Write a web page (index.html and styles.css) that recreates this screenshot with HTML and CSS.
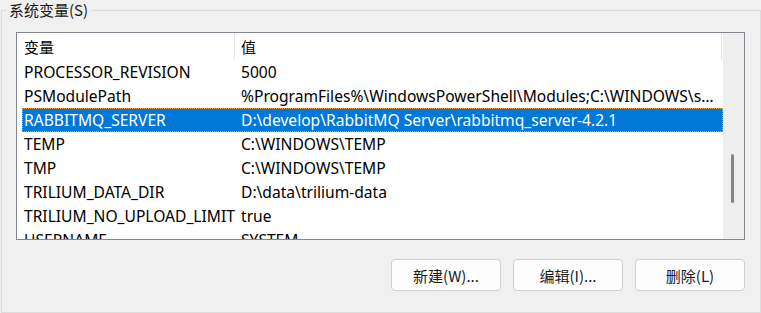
FILE: index.html
```html
<!DOCTYPE html>
<html>
<head>
    <meta charset="UTF-8">
    <title>系统变量</title>
    <link rel="stylesheet" href="styles.css">
</head>
<body>
<fieldset class="group">
    <legend>系统变量(S)</legend>
    <div class="list">
        <div class="table">
            <div class="head">
                <span class="col name">变量</span>
                <span class="col value">值</span>
            </div>
            <ul class="rows">
                <li><span class="name">PROCESSOR_REVISION</span><span class="value">5000</span></li>
                <li><span class="name">PSModulePath</span><span class="value">%ProgramFiles%\WindowsPowerShell\Modules;C:\WINDOWS\system32\WindowsPowerShell\v1.0\Modules</span></li>
                <li class="sel"><span class="name">RABBITMQ_SERVER</span><span class="value">D:\develop\RabbitMQ Server\rabbitmq_server-4.2.1</span></li>
                <li><span class="name">TEMP</span><span class="value">C:\WINDOWS\TEMP</span></li>
                <li><span class="name">TMP</span><span class="value">C:\WINDOWS\TEMP</span></li>
                <li><span class="name">TRILIUM_DATA_DIR</span><span class="value">D:\data\trilium-data</span></li>
                <li><span class="name">TRILIUM_NO_UPLOAD_LIMIT</span><span class="value">true</span></li>
                <li><span class="name">USERNAME</span><span class="value">SYSTEM</span></li>
            </ul>
        </div>
        <div class="scroll"><div class="thumb"></div></div>
    </div>
    <div class="buttons">
        <button>新建(W)...</button>
        <button>编辑(I)...</button>
        <button>删除(L)</button>
    </div>
</fieldset>
</body>
</html>
```

FILE: styles.css
```css
* {
    margin: 0;
    padding: 0;
    box-sizing: border-box;
    list-style: none;
}

body {
    background: #f0f0f0;
    font-family: "Noto Sans", "Noto Sans CJK SC", sans-serif;
    font-size: 15px;
    color: #000;
    width: 761px;
    height: 313px;
    overflow: hidden;
}

.group {
    margin-left: 1px;
    width: 760px;
    height: 313px;
    border: 1px solid #dcdcdc;
    padding: 0;
}

.group > legend {
    margin-left: 4px;
    padding: 0 3px;
    line-height: 20px;
    font-family: "Noto Sans CJK SC", sans-serif;
    color: #1a1a1a;
}

.list {
    margin: 12px 0 0 14px;
    width: 729px;
    height: 208px;
    border: 1px solid #828790;
    background: #fff;
    display: flex;
    overflow: hidden;
}

.table {
    width: 706px;
    overflow: hidden;
}

.head {
    height: 27px;
    display: flex;
    align-items: center;
    font-family: "Noto Sans CJK SC", sans-serif;
}

.head > .col {
    height: 26px;
    line-height: 26px;
    margin-top: 1px;
}

.head > .name {
    width: 218px;
    padding-left: 7px;
    border-right: 1px solid #e5e5e5;
}

.head > .value {
    width: 487px;
    padding-left: 6px;
    border-right: 1px solid #e5e5e5;
}

.rows > li {
    margin-left: 5px;
    height: 24px;
    line-height: 24px;
    display: flex;
    white-space: nowrap;
    font-size: 15.6px;
}

.rows > li > .name {
    width: 219px;
    flex-shrink: 0;
    padding-left: 2px;
    overflow: hidden;
}

.rows > li > .value {
    flex: 1;
    overflow: hidden;
    text-overflow: ellipsis;
    padding-right: 6px;
}

.rows > li.sel {
    background: #0078d7;
    color: #fff;
    outline: 1px dotted #e8a35c;
    outline-offset: -1px;
}

.scroll {
    width: 21px;
    height: 206px;
    background: #eeeeee;
    padding-top: 121px;
    padding-left: 8px;
}

.thumb {
    width: 3px;
    height: 49px;
    background: #858585;
    border-radius: 2px;
}

.buttons {
    margin: 19px 0 0 389px;
    display: flex;
    gap: 12px;
}

.buttons > button {
    width: 110px;
    height: 32px;
    background: #fdfdfd;
    border: 1px solid #d0d0d0;
    border-radius: 4px;
    font-family: "Noto Sans CJK SC", sans-serif;
    font-size: 15px;
    color: #1b1b1b;
}
```
